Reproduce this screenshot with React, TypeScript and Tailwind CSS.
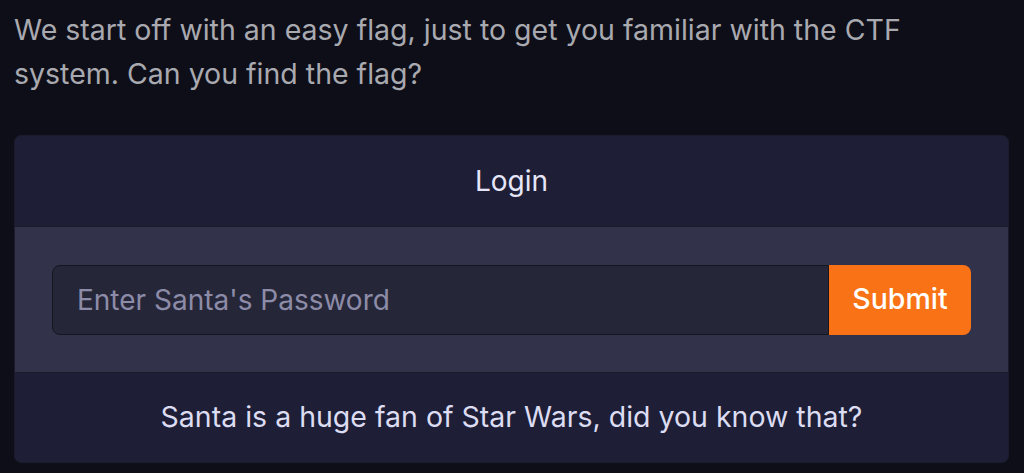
import React from "react";

export default function App() {
  return (
    <div
      className="min-h-[473px] w-full bg-[#0e0e18] px-[14px] pt-[8px]"
      style={{ fontFamily: "Inter, 'Noto Sans', sans-serif" }}
    >
      <p className="text-[28.5px] leading-[44px] text-[#a9a9b0]">
        We start off with an easy flag, just to get you familiar with the CTF
        <br />
        system. Can you find the flag?
      </p>
      <div className="mt-[39px] w-[995px] overflow-hidden rounded-[7px] border border-[#1a1b2c] bg-[#1e1f36]">
        <div className="flex h-[91px] items-center justify-center border-b border-[#191a2a] text-[28px] text-[#e6e6f8]">
          Login
        </div>
        <div className="flex h-[145px] items-center bg-[#32324a] px-[37px]">
          <div className="flex h-[70px] w-full">
            <input
              type="password"
              placeholder="Enter Santa's Password"
              className="h-full flex-1 rounded-l-[8px] border border-[#16161f] bg-[#262639] px-[24px] text-[28px] text-[#e6e6f8] outline-none placeholder:text-[#8d8ca8]"
            />
            <button className="h-full w-[142px] rounded-r-[8px] bg-[#f97316] text-[28.5px] font-medium text-white">
              Submit
            </button>
          </div>
        </div>
        <div className="flex h-[90px] items-center justify-center border-t border-[#191a2a] text-[28.5px] text-[#dcdcf2]">
          Santa is a huge fan of Star Wars, did you know that?
        </div>
      </div>
    </div>
  );
}
